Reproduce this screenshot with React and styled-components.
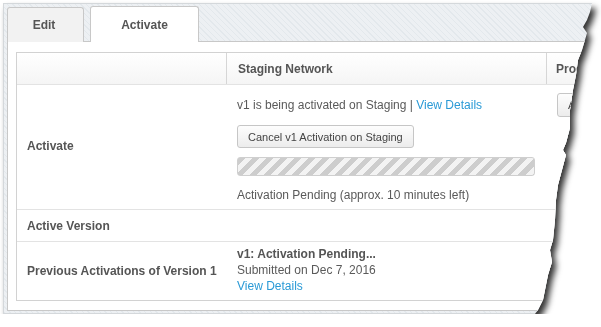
import React from 'react'
import styled, { createGlobalStyle } from 'styled-components'

const GlobalStyle = createGlobalStyle`
  html, body {
    margin: 0;
    background: #fff;
    font-family: "Liberation Sans", Arial, sans-serif;
  }
`

// torn right edge of the screenshot, page coords
const edge = [
  [592, 3], [590, 12], [587, 20], [583, 27], [587, 33], [585, 40], [582, 50],
  [578, 60], [576, 75], [573, 90], [570, 110], [570, 128], [566, 143], [563, 150],
  [566, 155], [562, 170], [558, 185], [556, 200], [555, 220], [553, 240], [550, 250],
  [552, 262], [548, 275], [545, 290], [543, 300], [538, 310], [535, 314],
]
const tornClip = `polygon(0 0, ${edge.map(([x, y]) => `${x - 3}px ${y - 3}px`).join(', ')}, 0 311px)`

const Page = styled.div`
  padding: 3px 0 0 3px;
`

const Shadow = styled.div`
  filter: drop-shadow(4px 5px 3px rgba(0, 0, 0, 0.8));
`

const Frame = styled.div`
  width: 600px;
  box-sizing: border-box;
  overflow: hidden;
  clip-path: ${tornClip};
  border-top: 1px solid #d4d8db;
  border-left: 1px solid #d4d8db;
  border-bottom: 1px solid #d4d8db;
  padding: 2px 0 2px 3px;
  background: repeating-linear-gradient(45deg, #e3e8ec 0 1px, #edf0f3 1px 4px);
`

const Tabs = styled.div`
  display: flex;
  align-items: flex-end;
  gap: 6px;
  height: 36px;
  margin-bottom: -1px;
`

const Tab = styled.div`
  box-sizing: border-box;
  height: ${p => (p.$active ? '36px' : '35px')};
  width: ${p => (p.$active ? '109px' : '77px')};
  display: flex;
  align-items: center;
  justify-content: center;
  padding-bottom: ${p => (p.$active ? '0' : '1px')};
  padding-right: ${p => (p.$active ? '0' : '3px')};
  border: 1px solid #c8c8c8;
  border-bottom: none;
  border-radius: 3px 3px 0 0;
  background: ${p => (p.$active ? '#fff' : '#f2f2f2')};
  position: ${p => (p.$active ? 'relative' : 'static')};
  font-size: 12px;
  font-weight: bold;
  color: #555;
`

const Panel = styled.div`
  width: 700px;
  height: 270px;
  box-sizing: border-box;
  background: #fff;
  border: 1px solid #c8c8c8;
  padding: 10px 9px 9px 8px;
`

const Table = styled.div`
  border: 1px solid #d2d2d2;
  width: 660px;
`

const Row = styled.div`
  display: grid;
  grid-template-columns: 210px 320px 1fr;
  min-height: ${p => p.$h || 'auto'};
  border-bottom: ${p => (p.$last ? 'none' : '1px solid #e3e3e3')};
  background: ${p => (p.$head ? 'linear-gradient(#ffffff, #f5f5f5)' : '#fff')};
  font-size: 12px;
  line-height: 16px;
  color: #5a5a5a;
`

const HeadCell = styled.div`
  display: flex;
  align-items: center;
  padding-left: ${p => p.$pad || '11px'};
  border-right: 1px solid #d6d6d6;
  font-weight: bold;
  color: #555;
  white-space: nowrap;
`

const Label = styled.div`
  display: flex;
  align-items: center;
  padding-left: 10px;
  padding-bottom: ${p => p.$pb || '0'};
  font-weight: bold;
  color: #555;
`

const Cell = styled.div`
  display: flex;
  flex-direction: column;
  align-items: flex-start;
  padding: ${p => p.$pad || '0 0 0 10px'};
  white-space: nowrap;
`

const Link = styled.span`
  color: #2a9ad6;
`

const Strong = styled.span`
  font-weight: bold;
  color: #555;
`

const Button = styled.div`
  box-sizing: border-box;
  height: ${p => p.$h || '23px'};
  margin-top: ${p => p.$mt || '0'};
  padding: 0 10px;
  display: flex;
  align-items: center;
  border: 1px solid #c6c6c6;
  border-radius: 3px;
  background: linear-gradient(#fdfdfd, #ececec);
  font-size: 11px;
  color: #444;
  white-space: nowrap;
`

const Progress = styled.div`
  box-sizing: border-box;
  width: 298px;
  height: 19px;
  margin-top: 9px;
  border: 1px solid #cfcfcf;
  border-radius: 3px;
  background: repeating-linear-gradient(135deg, #cdcdcd 0 5px, #f3f3f3 5px 10px);
`

const Line = styled.div`
  margin-top: ${p => p.$mt || '0'};
`

export default function App() {
  return (
    <>
      <GlobalStyle />
      <Page>
        <Shadow>
          <Frame>
            <Tabs>
              <Tab>Edit</Tab>
              <Tab $active>Activate</Tab>
            </Tabs>
            <Panel>
              <Table>
                <Row $head $h="31px">
                  <HeadCell />
                  <HeadCell>Staging Network</HeadCell>
                  <HeadCell $pad="9px">Production Network</HeadCell>
                </Row>
                <Row>
                  <Label $pb="2px">Activate</Label>
                  <Cell $pad="12px 0 6px 10px">
                    <Line>v1 is being activated on Staging | <Link>View Details</Link></Line>
                    <Button $mt="12px">Cancel v1 Activation on Staging</Button>
                    <Progress />
                    <Line $mt="11px">Activation Pending (approx. 10 minutes left)</Line>
                  </Cell>
                  <Cell $pad="8px 0 0 10px">
                    <Button $h="24px">Activate v1 on Production</Button>
                  </Cell>
                </Row>
                <Row $h="31px">
                  <Label>Active Version</Label>
                  <Cell />
                  <Cell />
                </Row>
                <Row $last $h="58px">
                  <Label>Previous Activations of Version 1</Label>
                  <Cell $pad="4px 0 6px 10px">
                    <Strong>v1: Activation Pending...</Strong>
                    <Line>Submitted on Dec 7, 2016</Line>
                    <Link>View Details</Link>
                  </Cell>
                  <Cell />
                </Row>
              </Table>
            </Panel>
          </Frame>
        </Shadow>
      </Page>
    </>
  )
}
